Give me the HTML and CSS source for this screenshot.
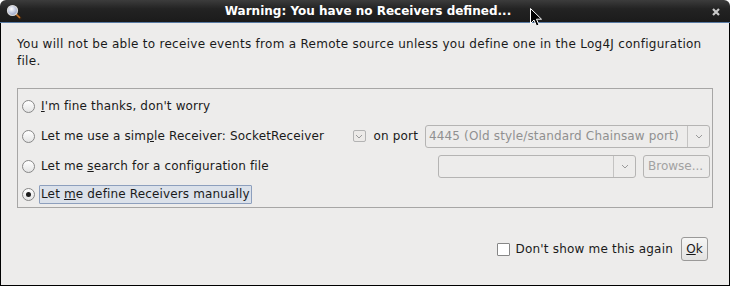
FILE: index.html
```html
<!DOCTYPE html>
<html lang="en">
  <head>
    <meta charset="UTF-8" />
    <title>Warning: You have no Receivers defined...</title>
    <link rel="stylesheet" href="styles.css">
  </head>
  <body>
    <div class="window">
      <div class="titlebar">
        <svg class="app-icon" width="16" height="16" viewBox="0 0 16 16">
          <defs>
            <radialGradient id="glass" cx="0.4" cy="0.35" r="0.7">
              <stop offset="0" stop-color="#ffffff" />
              <stop offset="1" stop-color="#8f9bc4" />
            </radialGradient>
          </defs>
          <line x1="9.5" y1="9.5" x2="14" y2="14" stroke="#3a2410" stroke-width="3" stroke-linecap="round" />
          <line x1="10" y1="10" x2="13.5" y2="13.5" stroke="#c8742c" stroke-width="1.6" stroke-linecap="round" />
          <circle cx="6.5" cy="6.5" r="5" fill="url(#glass)" stroke="#d8d8d8" stroke-width="1.2" />
        </svg>
        <div class="title">Warning: You have no Receivers defined...</div>
        <svg class="close" width="8" height="8" viewBox="0 0 8 8">
          <path d="M1 1 L7 7 M7 1 L1 7" stroke="#c9c9c9" stroke-width="2.2" />
        </svg>
      </div>

      <div class="content">
        <p class="message">
          You will not be able to receive events from a Remote source unless you define one in the Log4J configuration file.
        </p>

        <div class="group">
          <div class="row">
            <span class="radio"></span>
            <span class="label"><u>I</u>'m fine thanks, don't worry</span>
          </div>

          <div class="row">
            <span class="radio"></span>
            <span class="label">Let me use a sim<u>p</u>le Receiver: SocketReceiver</span>
            <div class="row-right">
              <span class="mini-combo"><svg width="8" height="5" viewBox="0 0 8 5"><path d="M1 1 L4 4 L7 1" fill="none" stroke="#9a9a9a" stroke-width="1" /></svg></span>
              <span class="port-label">on port</span>
              <div class="combo combo-port">
                <span class="combo-text">4445 (Old style/standard Chainsaw port)</span>
                <span class="combo-arrow"><svg width="8" height="5" viewBox="0 0 8 5"><path d="M1 1 L4 4 L7 1" fill="none" stroke="#9a9a9a" stroke-width="1" /></svg></span>
              </div>
            </div>
          </div>

          <div class="row">
            <span class="radio"></span>
            <span class="label">Let me <u>s</u>earch for a configuration file</span>
            <div class="row-right">
              <div class="combo combo-file">
                <span class="combo-text"></span>
                <span class="combo-arrow"><svg width="8" height="5" viewBox="0 0 8 5"><path d="M1 1 L4 4 L7 1" fill="none" stroke="#9a9a9a" stroke-width="1" /></svg></span>
              </div>
              <span class="button button-disabled">Browse...</span>
            </div>
          </div>

          <div class="row">
            <span class="radio radio-on"></span>
            <span class="label label-focus">Let <u>m</u>e define Receivers manually</span>
          </div>
        </div>

        <div class="footer">
          <span class="checkbox"></span>
          <span class="footer-label">Don't show me this again</span>
          <span class="button"><u>O</u>k</span>
        </div>
      </div>

      <svg class="cursor" width="13" height="20" viewBox="0 0 13 20">
        <path d="M0.5 0.5 L0.5 15.5 L4 12 L6.5 18 L9 17 L6.5 11.2 L11.5 11.2 Z" fill="#000" stroke="#fff" stroke-width="1" />
      </svg>
    </div>
  </body>
</html>
```

FILE: styles.css
```css
body {
  margin: 0;
  background: #ffffff;
  font-family: "DejaVu Sans", sans-serif;
  font-size: 12px;
  color: #1a1a1a;
}

.window {
  position: relative;
  width: 730px;
  height: 286px;
  display: flex;
  flex-direction: column;
}

.titlebar {
  height: 22px;
  flex: none;
  display: flex;
  align-items: center;
  background: linear-gradient(#3c3c3c, #232323 40%, #1b1b1b);
  border-radius: 6px 6px 0 0;
  border-bottom: 1px solid #587aa3;
  padding: 0 10px 0 6px;
}

.app-icon {
  flex: none;
  margin-top: 1px;
}

.title {
  flex: 1;
  text-align: center;
  color: #ffffff;
  font-weight: bold;
  font-size: 12px;
  padding-left: 2px;
}

.close {
  flex: none;
  margin-top: 1px;
}

.content {
  flex: 1;
  background: #edeceb;
  border: 1px solid #000;
  border-top: none;
  padding: 0 16px;
  display: flex;
  flex-direction: column;
}

.message {
  margin: 13px 0 0;
  line-height: 17px;
  padding-right: 10px;
  letter-spacing: 0.28px;
}

.group {
  margin-top: 18px;
  border: 1px solid #a7a6a5;
  height: 116px;
  padding: 2px 2px 0 4px;
}

.row {
  height: 30px;
  display: flex;
  align-items: center;
}

.row:last-child {
  height: 27px;
}

.radio {
  width: 11px;
  height: 11px;
  border: 1px solid #878787;
  border-radius: 50%;
  background: linear-gradient(#ffffff, #e4e4e4);
  flex: none;
  margin-right: 6px;
  position: relative;
}

.radio-on::after {
  content: "";
  position: absolute;
  left: 3px;
  top: 3px;
  width: 5px;
  height: 5px;
  border-radius: 50%;
  background: #1c1c1c;
}

.label {
  white-space: nowrap;
  border: 1px solid transparent;
  padding: 1px 1px 2px 1px;
  margin-left: -2px;
  letter-spacing: 0.15px;
}

.label-focus {
  background: #dbe1ea;
  border-color: #8d9fbd;
  border-radius: 1px;
}

.row-right {
  margin-left: auto;
  display: flex;
  align-items: center;
}

.mini-combo {
  width: 11px;
  height: 10px;
  border: 1px solid #b3b3b3;
  border-radius: 2px;
  display: flex;
  align-items: center;
  justify-content: center;
  background: #eceae8;
}

.port-label {
  margin-left: 8px;
  margin-right: 7px;
  letter-spacing: 0.15px;
}

.combo {
  height: 21px;
  border: 1px solid #b5b4b3;
  border-radius: 3px;
  display: flex;
  align-items: center;
  background: #edeceb;
}

.combo-port {
  width: 283px;
}

.combo-file {
  width: 196px;
}

.combo-text {
  flex: 1;
  color: #909090;
  padding-left: 3px;
  white-space: nowrap;
  overflow: hidden;
  letter-spacing: 0.15px;
}

.combo-arrow {
  width: 21px;
  height: 21px;
  border-left: 1px solid #c4c3c2;
  display: flex;
  align-items: center;
  justify-content: center;
}

.button {
  height: 21px;
  border: 1px solid #9a9998;
  border-radius: 3px;
  background: linear-gradient(#f6f6f5, #e3e2e1);
  display: flex;
  align-items: center;
  padding: 0 4px;
}

.button-disabled {
  margin-left: 7px;
  width: 57px;
  color: #a2a2a2;
  border-color: #b5b4b3;
  background: #edeceb;
}

.footer {
  margin-top: auto;
  margin-bottom: 24px;
  display: flex;
  align-items: center;
  justify-content: flex-end;
  padding-right: 5px;
}

.checkbox {
  width: 11px;
  height: 11px;
  border: 1px solid #878787;
  border-radius: 1px;
  background: #ffffff;
  margin-right: 6px;
}

.footer-label {
  margin-right: 8px;
  letter-spacing: 0.2px;
}

.footer .button {
  height: 22px;
  width: 17px;
  justify-content: center;
  color: #1a1a1a;
}

.cursor {
  position: absolute;
  left: 530px;
  top: 8px;
}
```
